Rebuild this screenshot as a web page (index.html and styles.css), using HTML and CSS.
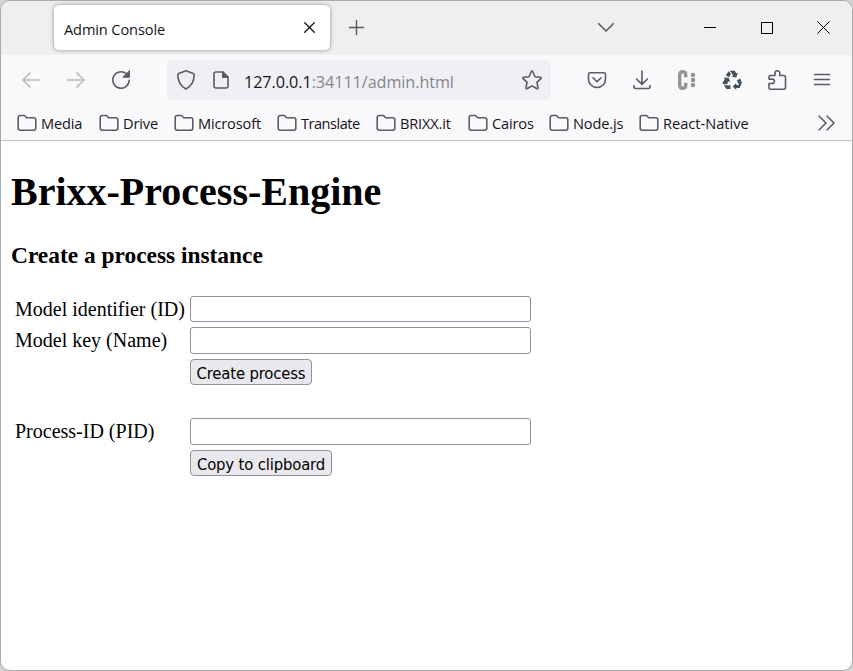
FILE: index.html
```html
<!DOCTYPE html>
<html lang="en">
<head>
<meta charset="utf-8">
<title>Admin Console</title>
<link rel="stylesheet" href="styles.css">
</head>
<body>
<div class="window">
  <header class="tabs">
    <div class="tab"><span class="tab-title">Admin Console</span>
      <svg class="dark" width="11" height="11" viewBox="0 0 11 11"><path d="M.7.7l9.6 9.6M10.3.7L.7 10.3"/></svg>
    </div>
    <svg class="new-tab" width="15" height="15" viewBox="0 0 15 15"><path d="M7.5 0v15M0 7.5h15"/></svg>
    <svg class="list-tabs" width="16" height="9" viewBox="0 0 16 9"><path d="M.7.7L8 8L15.3.7"/></svg>
    <svg class="minimize black" width="12" height="12" viewBox="0 0 12 12"><path d="M0 5.5h12"/></svg>
    <svg class="maximize black" width="12" height="12" viewBox="0 0 12 12"><path d="M.5.5h11v11H.5z"/></svg>
    <svg class="close black" width="13" height="13" viewBox="0 0 13 13"><path d="M.4.4l12.2 12.2M12.6.4L.4 12.6"/></svg>
  </header>
  <nav class="toolbar">
    <svg class="back faded" width="18" height="16" viewBox="0 0 18 16"><path d="M18 8H1M8 1L1 8l7 7"/></svg>
    <svg class="forward faded" width="18" height="16" viewBox="0 0 18 16"><path d="M0 8h17M10 1l7 7-7 7"/></svg>
    <svg class="reload" width="20" height="20" viewBox="0 0 20 20"><path d="M18.2 10.2A8.2 8.2 0 1 1 15.3 3.7"/><path class="solid" d="M18.5 1v6.2h-6.2z"/></svg>
    <div class="address">
      <svg width="20" height="22" viewBox="0 0 20 22"><path d="M10 1.800l7.200 2.800q1 .4 1 1.400C18 12.500 15.400 17.200 10 20 4.600 17.200 2 12.500 1.800 6q0-1 1-1.400z"/></svg>
      <svg class="page-icon" width="18" height="20" viewBox="0 0 18 20"><path d="M4 2h7l5 5v9q0 2-2 2H4q-2 0-2-2V4q0-2 2-2z"/><path class="solid" d="M10.500 2v5.500H16z"/></svg>
      <span class="url"><b>127.0.0.1</b>:34111/admin.html</span>
      <svg class="star" width="22" height="22" viewBox="0 0 22 22"><path d="M11 2q.5 0 .8.7l2.200 5 5.100.5c1.200.1 1.400 1 .6 1.700l-3.800 3.500 1.100 5.100c.2 1.100-.6 1.500-1.400 1L11 16.900l-4.600 2.600c-.8.5-1.600.1-1.400-1l1.100-5.100L2.300 9.900c-.8-.7-.6-1.600.6-1.700L8 7.700l2.200-5Q10.500 2 11 2z"/></svg>
    </div>
    <div class="actions">
      <svg width="20" height="20" viewBox="0 0 20 20"><path d="M3.300 2.800h13.400q1.800 0 1.800 1.800V9a8.500 8.500 0 0 1-17 0V4.600q0-1.800 1.800-1.800z"/><path d="M6 7.800l4 4 4-4"/></svg>
      <svg width="20" height="20" viewBox="0 0 20 20"><path d="M10 1v13M4.500 9l5.500 5.300L15.500 9M2 15.500v1.300q0 1.700 1.700 1.700h12.600q1.700 0 1.700-1.700v-1.300"/></svg>
      <svg class="c-mark" width="20" height="20" viewBox="0 0 20 20"><path d="M8.700 7.300V4.700Q8.700 1.800 5.700 1.800T2.700 4.800v10.400q0 3 3 3t3-3v-2.500"/><g><circle cx="16" cy="5" r="2.300"/><circle cx="16" cy="10" r="2.300"/><circle cx="16" cy="15" r="2.300"/></g></svg>
      <svg class="recycle" width="20" height="20" viewBox="0 0 20 20"><path d="M7.500.8h5.300l1.600 2.600 1.700-.8-1.900 5-4.700-.9 1.600-1-1.700-2.900z"/><path d="M6.800 1.200L9 4.100 7 7.200 3.700 5.200z"/><path d="M1.400 7.500l5.200.2 1.700 4.400-1.700-.9L5 14.300H1.200L.6 12.800 2.900 8.800z"/><path d="M2 15.300h6.500v3.800H4.300z"/><path d="M14.800 10.500l3.400-2 1.700 4-2.200 5.500h-3.500v1.900L10.700 16.400l3.500-3.300v1.800h3z"/></svg>
      <svg width="20" height="22" viewBox="0 0 20 22"><path d="M2 19.200v-4.700h3.200a2.200 2.200 0 0 0 0-4.400H2V8.300Q2 6.500 3.800 6.500H8V4.200a2.400 2.400 0 0 1 4.800 0v2.300h3.900q1.800 0 1.800 1.800v10.200q0 1.700-1.800 1.700H3.500Q2 20.200 2 19.200z"/></svg>
      <svg width="20" height="20" viewBox="0 0 20 20"><path d="M2.500 4.500h15M2.500 9.500h15M2.500 14.500h15"/></svg>
    </div>
  </nav>
  <svg class="symbols" width="0" height="0"><symbol id="folder" viewBox="0 0 20 18"><path d="M3.500 1.500h4l2.200 2.200h7.200q1.900 0 1.900 1.900v8.700q0 1.900-1.900 1.900H3.200q-2 0-2-1.900V3.500q0-2 2.300-2z"/></symbol></svg>
  <nav class="bookmarks">
    <a><svg width="20" height="18"><use href="#folder"/></svg>Media</a>
    <a><svg width="20" height="18"><use href="#folder"/></svg>Drive</a>
    <a><svg width="20" height="18"><use href="#folder"/></svg>Microsoft</a>
    <a class="tight"><svg width="20" height="18"><use href="#folder"/></svg>Translate</a>
    <a><svg width="20" height="18"><use href="#folder"/></svg>BRIXX.it</a>
    <a><svg width="20" height="18"><use href="#folder"/></svg>Cairos</a>
    <a><svg width="20" height="18"><use href="#folder"/></svg>Node.js</a>
    <a class="loose"><svg width="20" height="18"><use href="#folder"/></svg>React-Native</a>
    <svg class="more" width="17" height="16" viewBox="0 0 17 16"><path d="M1 1l7 7-7 7M9 1l7 7-7 7"/></svg>
  </nav>
  <main>
    <h1>Brixx-Process-Engine</h1>
    <h3>Create a process instance</h3>
    <form class="fields">
      <label for="model-id">Model identifier (ID)</label><input id="model-id" type="text">
      <label for="model-key">Model key (Name)</label><input id="model-key" type="text">
      <button class="create" type="button">Create process</button>
      <label for="pid">Process-ID (PID)</label><input id="pid" type="text">
      <button class="copy" type="button">Copy to clipboard</button>
    </form>
  </main>
</div>
</body>
</html>
```
FILE: styles.css
```css
* { box-sizing: border-box; }
body { margin: 0; background: #d2d2d2; font-family: "Open Sans", "Noto Sans", sans-serif; color: #15141a; }
.window { width: 853px; height: 671px; border: 1px solid #a9a9a9; border-radius: 10px; background: #fff; overflow: hidden; }
svg { display: block; flex: none; fill: none; stroke: #5b5b66; stroke-width: 1.6; stroke-linecap: round; stroke-linejoin: round; }
.solid { fill: #5b5b66; stroke-width: 1; }
.dark { stroke: #15141a; stroke-width: 1.3; }
.black { stroke: #000; stroke-width: 1; stroke-linecap: butt; stroke-linejoin: miter; }
.faded { stroke: #b9b9be; }
.symbols { position: absolute; }

.tabs { height: 54px; padding: 0 0 1px 53px; background: #efefef; display: flex; align-items: center; }
.tab { width: 276px; height: 45px; padding: 0 15px 0 10px; display: flex; align-items: center; justify-content: space-between; background: #fff; border-radius: 5px; box-shadow: 0 0 4px rgba(0, 0, 0, .4); }
.tab-title { font-size: 14.6px; letter-spacing: -.12px; padding-top: 2px; }
.new-tab { margin-left: 19px; stroke-width: 1.4; stroke-linecap: butt; }
.list-tabs { margin-left: 234px; }
.minimize { margin-left: 90px; }
.maximize { margin-left: 45px; }
.close { margin-left: 44px; }

.toolbar { height: 51px; padding-bottom: 1px; background: #f9f9fb; display: flex; align-items: center; }
.back { margin-left: 21px; }
.forward { margin-left: 27px; }
.reload { margin-left: 26px; }
.address { width: 384px; height: 40px; margin-left: 36px; padding: 0 8px; display: flex; align-items: center; background: #f0f0f4; border-radius: 5px; }
.address svg { margin-left: 1px; }
.address .page-icon { margin-left: 16px; }
.url { flex: 1; margin-left: 14px; padding-top: 3px; font-size: 16.2px; letter-spacing: -.07px; color: #85858b; white-space: nowrap; }
.url b { font-weight: 400; color: #15141a; }
.actions { display: grid; grid-template-columns: repeat(6, 20px); gap: 25px; align-items: center; margin-left: 36px; }
.c-mark { stroke: #949494; stroke-width: 3.4; stroke-linecap: butt; }
.c-mark g { fill: #949494; stroke: none; }
.recycle { fill: #46515b; stroke: none; }

.bookmarks { height: 35px; padding: 0 17px 0 16px; background: #f9f9fb; border-bottom: 1px solid #c7c7ca; display: grid; grid-template-columns: 82px 75px 103px 99px 92px 81px 90px 1fr auto; align-items: center; font-size: 14.6px; letter-spacing: -.16px; }
.bookmarks a { display: flex; align-items: center; gap: 4px; white-space: nowrap; }
.bookmarks .tight { letter-spacing: -.5px; }
.bookmarks .loose { letter-spacing: 0; }

main { padding: 28px 10px 0; font-family: "Liberation Serif", serif; color: #000; }
h1 { margin: 0; font-size: 40px; line-height: 46px; }
h3 { margin: 27px 0 0; font-size: 23.4px; line-height: 27px; }
.fields { margin: 27px 0 0 4px; display: grid; grid-template-columns: 170px 341px; grid-template-rows: 26px 27px 26px 55px 26px; column-gap: 5px; row-gap: 5px; font-size: 20px; }
.fields label { line-height: 27px; white-space: nowrap; }
.fields input { width: 341px; height: 100%; margin: 0; border: 1px solid #8f8f9d; border-radius: 3px; background: #fff; }
.fields label:nth-of-type(3), .fields #pid { margin-top: 28px; }
.fields #pid { height: 27px; }
.fields button { grid-column: 2; justify-self: start; height: 26px; padding: 2px 0 0; border: 1px solid #8f8f9d; border-radius: 4px; background: #e9e9ed; color: #000; font: 16.5px "DejaVu Sans Condensed", "DejaVu Sans", sans-serif; font-stretch: condensed; letter-spacing: -.15px; white-space: nowrap; }
.create { width: 122px; }
.copy { width: 142px; }
```
